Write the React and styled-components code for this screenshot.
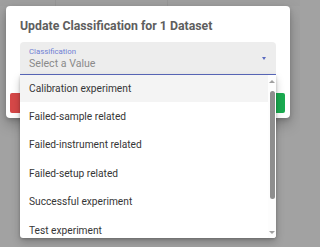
import React from 'react'
import styled, { createGlobalStyle } from 'styled-components'

const GlobalStyle = createGlobalStyle`
  html, body {
    margin: 0;
    padding: 0;
    background: #a2a2a2;
    font-family: Roboto, "Liberation Sans", sans-serif;
    -webkit-font-smoothing: antialiased;
  }
`

const options = [
  'Calibration experiment',
  'Failed-sample related',
  'Failed-instrument related',
  'Failed-setup related',
  'Successful experiment',
  'Test experiment',
]

const Page = styled.div`
  position: relative;
  width: 300px;
  height: 247px;
  overflow: hidden;
  background: #a2a2a2;
`

// table header of the page under the overlay, only a sliver shows
const Backdrop = styled.div`
  display: grid;
  grid-template-columns: 55px 112px 1fr;
  height: 6px;
  background: #9f9f9f;
  & > * + * {
    border-left: 1px solid #979797;
  }
`

const Dialog = styled.div`
  position: absolute;
  top: 6px;
  left: 6px;
  width: 284px;
  height: 112px;
  display: flex;
  flex-direction: column;
  background: #fff;
  border-radius: 4px;
  box-shadow: 0 6px 14px rgba(0, 0, 0, 0.25), 0 2px 4px rgba(0, 0, 0, 0.15);
`

const Title = styled.h2`
  margin: 0;
  padding: 12px 14px 0;
  font-size: 12.3px;
  line-height: 16px;
  font-weight: 700;
  color: #5e5e5e;
`

const Body = styled.div`
  padding: 8px 14px 0;
`

const Field = styled.div`
  position: relative;
  height: 32px;
  display: flex;
  align-items: center;
  padding: 0 9px;
  background: #ededed;
  border-radius: 4px 4px 0 0;
  border-bottom: 1px solid #5c6bc0;
`

const FieldText = styled.div`
  flex: 1;
  display: flex;
  flex-direction: column;
  padding-top: 2px;
`

const Label = styled.span`
  font-size: 7.8px;
  line-height: 9px;
  color: #7080d4;
`

const Placeholder = styled.span`
  font-size: 10.6px;
  line-height: 15px;
  color: #8a8a8a;
`

const Caret = styled.span`
  width: 0;
  height: 0;
  margin-right: 1px;
  margin-top: 1px;
  border-left: 2.5px solid transparent;
  border-right: 2.5px solid transparent;
  border-top: 3px solid #5c6bc0;
`

const Actions = styled.div`
  display: flex;
  justify-content: space-between;
  margin-top: auto;
  padding: 0 5px 5px 4px;
`

const Button = styled.button`
  width: 64px;
  height: 20px;
  border: 0;
  border-radius: 2px;
  font-family: inherit;
  font-size: 9px;
  color: #fff;
  background: ${p => (p.tone === 'ok' ? '#1aab50' : '#d64848')};
`

const Menu = styled.div`
  position: absolute;
  top: 100%;
  left: 0;
  right: 0;
  margin-top: 1px;
  height: 163px;
  display: flex;
  background: #fff;
  border-radius: 0 0 3px 3px;
  box-shadow: 0 4px 8px rgba(0, 0, 0, 0.22), 0 1px 3px rgba(0, 0, 0, 0.2);
  overflow: hidden;
  z-index: 2;
`

const List = styled.ul`
  flex: 1;
  list-style: none;
  margin: -1px 0 0;
  padding: 0;
`

const Item = styled.li`
  height: 28.4px;
  display: flex;
  align-items: center;
  padding: 0 9px;
  font-size: 10.2px;
  color: #363636;
  background: ${p => (p.active ? '#f4f4f4' : 'transparent')};
`

const Scrollbar = styled.div`
  width: 8px;
  display: flex;
  flex-direction: column;
  align-items: center;
  padding: 5px 0 4px;
  background: #fdfdfd;
`

const Arrow = styled.span`
  width: 0;
  height: 0;
  border-left: 3px solid transparent;
  border-right: 3px solid transparent;
  ${p =>
    p.up
      ? 'border-bottom: 3px solid #a0a0a0;'
      : 'border-top: 3px solid #a0a0a0; margin-top: auto;'}
`

const Thumb = styled.span`
  width: 5px;
  height: 108px;
  margin-top: 8px;
  border-radius: 3px;
  background: #8e8e8e;
`

export default function App() {
  return (
    <Page>
      <GlobalStyle />
      <Backdrop>
        <div />
        <div />
        <div />
      </Backdrop>
      <Dialog>
        <Title>Update Classification for 1 Dataset</Title>
        <Body>
          <Field>
            <FieldText>
              <Label>Classification</Label>
              <Placeholder>Select a Value</Placeholder>
            </FieldText>
            <Caret />
            <Menu>
              <List>
                {options.map((o, i) => (
                  <Item key={o} active={i === 0}>
                    {o}
                  </Item>
                ))}
              </List>
              <Scrollbar>
                <Arrow up />
                <Thumb />
                <Arrow />
              </Scrollbar>
            </Menu>
          </Field>
        </Body>
        <Actions>
          <Button>CANCEL</Button>
          <Button tone="ok">SAVE</Button>
        </Actions>
      </Dialog>
    </Page>
  )
}
